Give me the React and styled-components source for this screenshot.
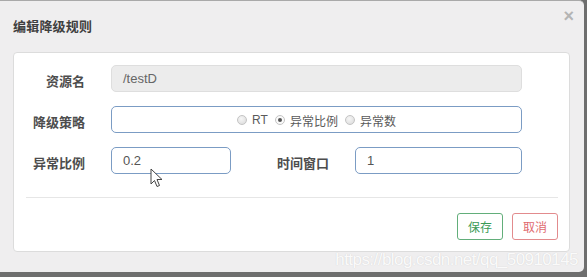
import React from "react";
import styled, { createGlobalStyle, css } from "styled-components";

const GlobalStyle = createGlobalStyle`
  html, body {
    margin: 0;
    padding: 0;
    background: #6e6e6e;
    font-family: "Liberation Sans", "Noto Sans CJK SC", sans-serif;
  }
`;

const Screen = styled.div`
  width: 587px;
  height: 277px;
  overflow: hidden;
  background: #6e6e6e;
`;

const Modal = styled.div`
  position: relative;
  width: 584px;
  height: 272px;
  box-sizing: border-box;
  background: #efeeef;
  border-top: 1px solid #a9a9a9;
  border-radius: 0 5px 5px 0;
  display: flex;
  flex-direction: column;
`;

const Header = styled.div`
  height: 51px;
  flex-shrink: 0;
  display: flex;
  align-items: flex-start;
  justify-content: space-between;
  padding: 0 10px 0 13px;
  box-sizing: border-box;
`;

const Title = styled.h4`
  margin: 16px 0 0;
  font-family: "Noto Sans CJK SC", sans-serif;
  font-size: 13px;
  line-height: 18px;
  font-weight: 700;
  color: #3f3f3f;
  letter-spacing: 0.2px;
`;

const Close = styled.span`
  margin-top: 6px;
  font-family: "Liberation Sans", sans-serif;
  font-size: 18px;
  line-height: 18px;
  color: #b4b4b4;
  font-weight: 700;
`;

const Card = styled.div`
  margin: 0 14px 0 13px;
  height: 200px;
  box-sizing: border-box;
  background: #fff;
  border: 1px solid #dcdcdc;
  border-radius: 4px;
  padding-top: 12px;
  display: flex;
  flex-direction: column;
`;

const Row = styled.div`
  display: flex;
  align-items: center;
  height: 27px;
  margin-bottom: 14px;
`;

const Label = styled.label`
  width: ${(p) => p.w || 71}px;
  flex-shrink: 0;
  text-align: right;
  padding-right: 26px;
  box-sizing: content-box;
  font-family: "Noto Sans CJK SC", sans-serif;
  font-size: 13px;
  font-weight: 700;
  color: #4d4d4d;
  padding-top: 4px;
`;

const Field = styled.div`
  width: ${(p) => p.w}px;
  height: 27px;
  box-sizing: border-box;
  border-radius: 5px;
  border: 1px solid #7b9cc4;
  background: #fff;
  display: flex;
  align-items: center;
  padding-left: 11px;
  font-family: "Liberation Sans", "Noto Sans CJK SC", sans-serif;
  font-size: 13px;
  color: #555;
  ${(p) =>
    p.disabled &&
    css`
      background: #ececec;
      border-color: #dedede;
      color: #666;
    `}
  ${(p) =>
    p.center &&
    css`
      justify-content: center;
      padding-left: 0;
      padding-top: 1px;
    `}
`;

const RadioItem = styled.span`
  display: inline-flex;
  align-items: center;
  margin-right: 7px;
  font-family: "Liberation Sans", "Noto Sans CJK SC", sans-serif;
  font-size: 12px;
  color: #5a5a5a;
  &:last-child {
    margin-right: 0;
  }
`;

const Dot = styled.span`
  width: 8px;
  height: 8px;
  border-radius: 50%;
  border: 1px solid #c4c4c4;
  background: radial-gradient(circle at 40% 35%, #f6f6f6, #d9d9d9);
  margin-right: 5px;
  position: relative;
  ${(p) =>
    p.checked &&
    css`
      background: #fafafa;
      &::after {
        content: "";
        position: absolute;
        left: 2px;
        top: 2px;
        width: 4px;
        height: 4px;
        border-radius: 50%;
        background: #555;
      }
    `}
`;

const Divider = styled.div`
  height: 1px;
  flex-shrink: 0;
  background: #e6e6e6;
  margin: 9px 11px 0 12px;
`;

const Footer = styled.div`
  display: flex;
  justify-content: flex-end;
  gap: 9px;
  padding: 15px 11px 0 0;
`;

const Button = styled.button`
  width: 46px;
  height: 27px;
  box-sizing: border-box;
  background: #fff;
  border-radius: 3px;
  font-family: "Noto Sans CJK SC", sans-serif;
  font-size: 12px;
  padding: 0;
  border: 1px solid ${(p) => (p.danger ? "#e28b8d" : "#62ae7a")};
  color: ${(p) => (p.danger ? "#e06a6f" : "#3a9b57")};
`;

const Watermark = styled.div`
  position: absolute;
  right: 6px;
  bottom: 2px;
  font-family: "Liberation Sans", sans-serif;
  font-size: 17px;
  letter-spacing: -0.55px;
  color: rgba(255, 255, 255, 0.92);
  text-shadow: 0 0 1px rgba(140, 140, 140, 0.35);
`;

const Cursor = styled.svg`
  position: absolute;
  left: 150px;
  top: 167px;
`;

const App = () => {
  return (
    <Screen>
      <GlobalStyle />
      <Modal>
        <Header>
          <Title>编辑降级规则</Title>
          <Close>×</Close>
        </Header>
        <Card>
          <Row>
            <Label>资源名</Label>
            <Field w={411} disabled>
              /testD
            </Field>
          </Row>
          <Row>
            <Label>降级策略</Label>
            <Field w={411} center>
              <RadioItem>
                <Dot />
                RT
              </RadioItem>
              <RadioItem>
                <Dot checked />
                异常比例
              </RadioItem>
              <RadioItem>
                <Dot />
                异常数
              </RadioItem>
            </Field>
          </Row>
          <Row>
            <Label>异常比例</Label>
            <Field w={120}>0.2</Field>
            <Label w={98}>时间窗口</Label>
            <Field w={167}>1</Field>
          </Row>
          <Divider />
          <Footer>
            <Button>保存</Button>
            <Button danger>取消</Button>
          </Footer>
        </Card>
        <Watermark>https://blog.csdn.net/qq_50910145</Watermark>
        <Cursor width="14" height="21" viewBox="0 0 14 21">
          <path
            d="M1 1 L1 16 L4.5 12.5 L7 18.5 L9.5 17.5 L7 11.5 L12 11.5 Z"
            fill="#fff"
            stroke="#444"
            strokeWidth="1"
            strokeLinejoin="round"
          />
        </Cursor>
      </Modal>
    </Screen>
  );
};

export default App;
